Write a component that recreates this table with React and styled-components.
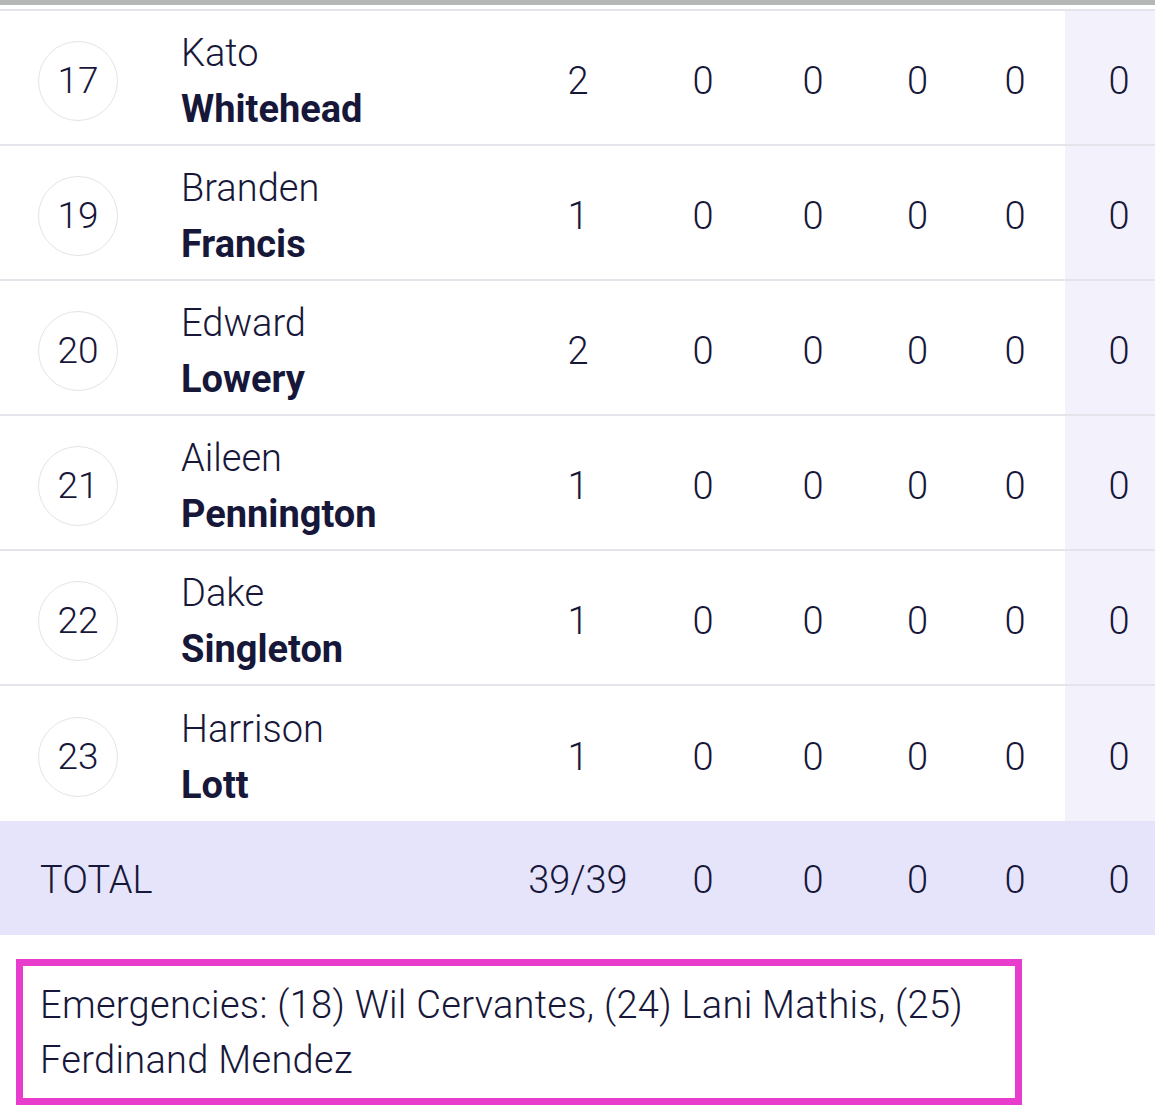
import React from 'react';
import styled, { createGlobalStyle } from 'styled-components';

const GlobalStyle = createGlobalStyle`
  body {
    margin: 0;
    background: #ffffff;
    font-family: Roboto, "Liberation Sans", sans-serif;
    color: #17173a;
  }
`;

const COLS = '160px 346px 144px 106px 114px 95px 100px 90px';

const Page = styled.div`
  width: 1155px;
`;

const TopBar = styled.div`
  height: 5px;
  background: #b5b7b6;
  margin-bottom: 4px;
`;

const Table = styled.div`
  border-top: 2px solid #e4e5ea;
`;

const Row = styled.div`
  display: grid;
  grid-template-columns: ${COLS};
  height: 135px;
  box-sizing: border-box;
  padding-top: 6px;
  border-bottom: ${({ $last }) => ($last ? 'none' : '2px solid #e4e5ea')};
`;

// $end marks the last column; $shade gives it the lavender tint
const Cell = styled.div`
  display: flex;
  align-items: center;
  justify-content: center;
  font-size: 38px;
  font-weight: 300;
  padding-left: ${({ $end }) => ($end ? '18px' : '0')};
  ${({ $shade }) =>
    $shade &&
    `
    background: #f3f2fc;
    margin-top: -6px;
    padding-top: 6px;
  `}
`;

const BadgeCell = styled.div`
  display: flex;
  align-items: center;
  padding-left: 38px;
`;

const Badge = styled.div`
  width: 80px;
  height: 80px;
  box-sizing: border-box;
  border-radius: 50%;
  border: 1.5px solid #e3e4e8;
  display: flex;
  align-items: center;
  justify-content: center;
  font-size: 37px;
  font-weight: 300;
`;

const NameCell = styled.div`
  display: flex;
  flex-direction: column;
  justify-content: center;
  padding-left: 21px;
  line-height: 56px;
  font-size: 38px;
`;

const First = styled.span`
  font-weight: 300;
`;

const Last = styled.span`
  font-weight: 700;
`;

const TotalRow = styled.div`
  display: grid;
  grid-template-columns: ${COLS};
  height: 114px;
  box-sizing: border-box;
  padding-top: 4px;
  background: #e6e4fb;
`;

const TotalLabel = styled.div`
  grid-column: span 2;
  display: flex;
  align-items: center;
  padding-left: 40px;
  font-size: 38px;
  font-weight: 300;
`;

const Emergencies = styled.div`
  margin: 24px 0 4px 16px;
  width: 1006px;
  box-sizing: border-box;
  border: 7px solid #e83ccc;
  padding: 12px 17px 10px;
  font-size: 38px;
  font-weight: 300;
  line-height: 55px;
  letter-spacing: 0.3px;
`;

const players = [
  { no: 17, first: 'Kato', last: 'Whitehead', g: 2 },
  { no: 19, first: 'Branden', last: 'Francis', g: 1 },
  { no: 20, first: 'Edward', last: 'Lowery', g: 2 },
  { no: 21, first: 'Aileen', last: 'Pennington', g: 1 },
  { no: 22, first: 'Dake', last: 'Singleton', g: 1 },
  { no: 23, first: 'Harrison', last: 'Lott', g: 1 },
];

export default function App() {
  return (
    <Page>
      <GlobalStyle />
      <TopBar />
      <Table>
        {players.map((p, i) => (
          <Row key={p.no} $last={i === players.length - 1}>
            <BadgeCell>
              <Badge>{p.no}</Badge>
            </BadgeCell>
            <NameCell>
              <First>{p.first}</First>
              <Last>{p.last}</Last>
            </NameCell>
            <Cell>{p.g}</Cell>
            <Cell>0</Cell>
            <Cell>0</Cell>
            <Cell>0</Cell>
            <Cell>0</Cell>
            <Cell $end $shade>0</Cell>
          </Row>
        ))}
        <TotalRow>
          <TotalLabel>TOTAL</TotalLabel>
          <Cell>39/39</Cell>
          <Cell>0</Cell>
          <Cell>0</Cell>
          <Cell>0</Cell>
          <Cell>0</Cell>
          <Cell $end>0</Cell>
        </TotalRow>
      </Table>
      <Emergencies>
        Emergencies: (18) Wil Cervantes, (24) Lani Mathis, (25) Ferdinand Mendez
      </Emergencies>
    </Page>
  );
}
